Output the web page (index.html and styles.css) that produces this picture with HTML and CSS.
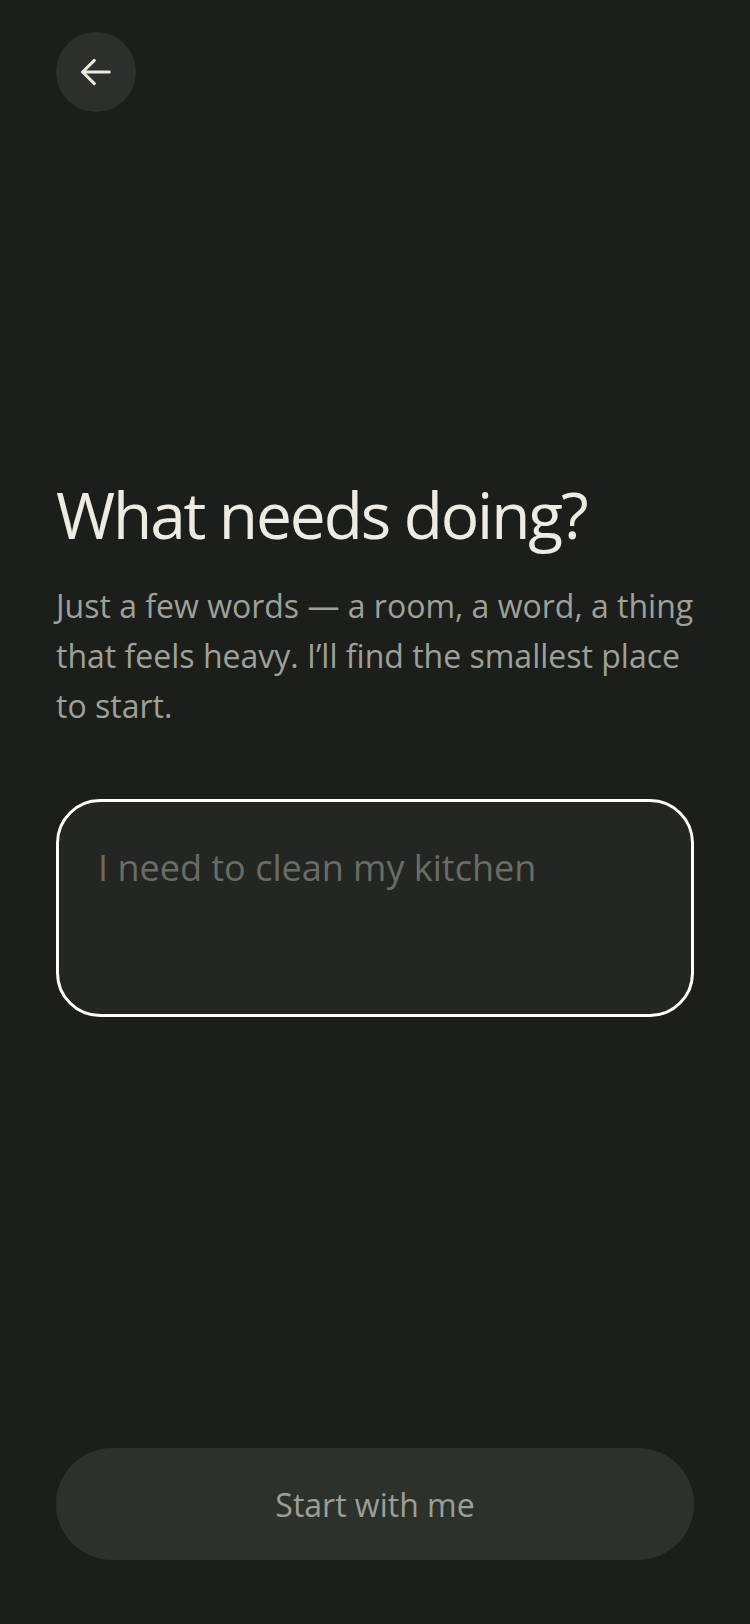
FILE: index.html
```html
<!DOCTYPE html>
<html lang="en">
<head>
<meta charset="utf-8">
<title>What needs doing?</title>
<link rel="stylesheet" href="styles.css">
</head>
<body>
<main class="screen">
  <header class="top">
    <button class="back" aria-label="Back">
      <svg width="40" height="40" viewBox="0 0 24 24" fill="none" stroke="currentColor" stroke-width="1.8" stroke-linecap="round" stroke-linejoin="round"><path d="M20 12H4"/><path d="M11 19l-7-7 7-7"/></svg>
    </button>
  </header>
  <section class="content">
    <h1 class="title">What needs doing?</h1>
    <p class="lead">Just a few words — a room, a word, a thing that feels heavy. I’ll find the smallest place to start.</p>
    <textarea class="entry" placeholder="I need to clean my kitchen"></textarea>
  </section>
  <div class="spacer"></div>
  <footer class="bottom">
    <button class="start">Start with me</button>
  </footer>
</main>
</body>
</html>
```

FILE: styles.css
```css
html, body {
  margin: 0;
  padding: 0;
  background: #1b1e1b;
}
body {
  font-family: "Open Sans", "Noto Sans", sans-serif;
}
.screen {
  box-sizing: border-box;
  min-height: 1624px;
  padding: 32px 56px 64px;
  display: flex;
  flex-direction: column;
}
.top {
  display: flex;
}
.back {
  width: 80px;
  height: 80px;
  border-radius: 50%;
  border: none;
  background: #2c2f2b;
  color: #ece9e1;
  display: flex;
  align-items: center;
  justify-content: center;
  padding: 0;
}
.content {
  margin-top: 364px;
  display: flex;
  flex-direction: column;
}
.title {
  margin: 0;
  font-size: 64px;
  line-height: 77px;
  font-weight: 400;
  color: #eeebe3;
  letter-spacing: -2.1px;
}
.lead {
  margin: 28px 0 0;
  font-size: 32px;
  line-height: 50px;
  color: #9fa199;
}
.entry {
  margin-top: 68px;
  box-sizing: border-box;
  height: 218px;
  width: 100%;
  border: 3px solid #ffffff;
  border-radius: 44px;
  background: #232622;
  padding: 42px 37px 42px 39px;
  font-family: "Open Sans", "Noto Sans", sans-serif;
  font-size: 36px;
  line-height: 47px;
  color: #e8e6df;
  resize: none;
  outline: none;
}
.entry::placeholder {
  color: #6a6d66;
}
.spacer {
  flex: 1;
}
.start {
  width: 100%;
  height: 112px;
  border: none;
  border-radius: 56px;
  background: #2d312c;
  color: #9c9f97;
  font-family: "Open Sans", "Noto Sans", sans-serif;
  font-size: 32px;
}
```
